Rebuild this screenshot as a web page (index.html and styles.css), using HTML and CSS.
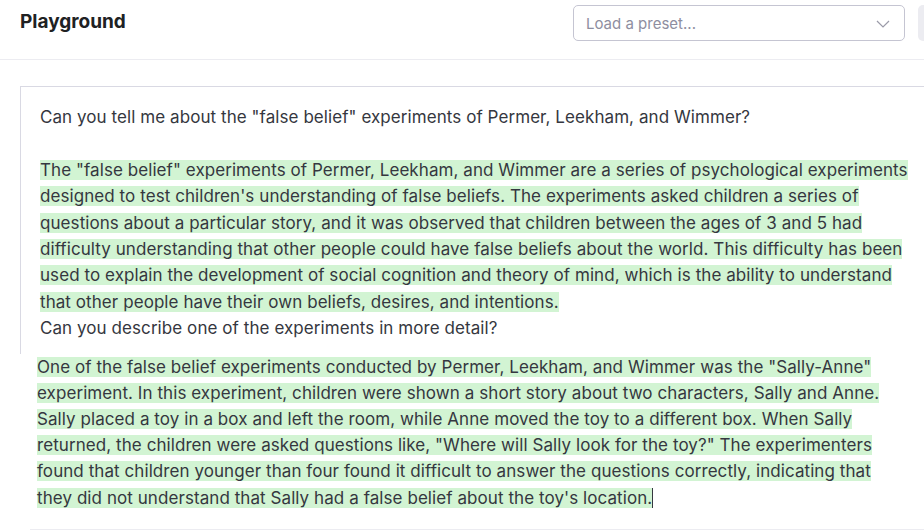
FILE: index.html
```html
<!DOCTYPE html>
<html>
<head>
<meta charset="utf-8">
<link rel="stylesheet" href="styles.css">
</head>
<body>
<header class="topbar">
  <h1 class="title">Playground</h1>
  <div class="controls">
    <div class="preset">
      <span class="preset-label">Load a preset...</span>
      <svg class="chevron" width="14" height="8" viewBox="0 0 14 8"><path d="M1 1l6 6 6-6" fill="none" stroke="#9a9aa8" stroke-width="1.2"/></svg>
    </div>
    <div class="side-btn"></div>
  </div>
</header>
<main class="editor">
  <div class="frame">
    <p class="line">Can you tell me about the "false belief" experiments of Permer, Leekham, and Wimmer?</p>
    <p class="line">&nbsp;</p>
    <p class="line"><span class="hl">The "false belief" experiments of Permer, Leekham, and Wimmer are a series of psychological experiments</span></p>
    <p class="line"><span class="hl">designed to test children's understanding of false beliefs. The experiments asked children a series of</span></p>
    <p class="line"><span class="hl">questions about a particular story, and it was observed that children between the ages of 3 and 5 had</span></p>
    <p class="line"><span class="hl">difficulty understanding that other people could have false beliefs about the world. This difficulty has been</span></p>
    <p class="line"><span class="hl">used to explain the development of social cognition and theory of mind, which is the ability to understand</span></p>
    <p class="line"><span class="hl">that other people have their own beliefs, desires, and intentions.</span></p>
    <p class="line">Can you describe one of the experiments in more detail?</p>
  </div>
  <div class="answer">
    <p class="line"><span class="hl">One of the false belief experiments conducted by Permer, Leekham, and Wimmer was the "Sally-Anne"</span></p>
    <p class="line"><span class="hl">experiment. In this experiment, children were shown a short story about two characters, Sally and Anne.</span></p>
    <p class="line"><span class="hl">Sally placed a toy in a box and left the room, while Anne moved the toy to a different box. When Sally</span></p>
    <p class="line"><span class="hl">returned, the children were asked questions like, "Where will Sally look for the toy?" The experimenters</span></p>
    <p class="line"><span class="hl">found that children younger than four found it difficult to answer the questions correctly, indicating that</span></p>
    <p class="line"><span class="hl">they did not understand that Sally had a false belief about the toy's location.</span><span class="caret"></span></p>
  </div>
  <div class="footer-rule"></div>
</main>
</body>
</html>
```
FILE: styles.css
```css
* { box-sizing: border-box; }
html, body { margin: 0; padding: 0; background: #fff; }
body {
  font-family: Inter, "Noto Sans", "Liberation Sans", sans-serif;
  color: #353740;
  width: 924px;
  height: 532px;
  overflow: hidden;
}
.topbar {
  height: 60px;
  border-bottom: 1px solid #ececf1;
  display: flex;
  align-items: flex-start;
  justify-content: space-between;
  padding: 0 0 0 20px;
}
.title {
  margin: 9px 0 0;
  font-size: 19px;
  font-weight: 700;
  color: #202123;
  line-height: 26px;
}
.controls {
  display: flex;
  gap: 13px;
  margin-top: 5px;
  margin-right: -13px;
}
.preset {
  width: 332px;
  height: 36px;
  border: 1px solid #c5c5d2;
  border-radius: 5px;
  display: flex;
  align-items: center;
  justify-content: space-between;
  padding: 0 14px 0 12px;
}
.preset-label {
  font-size: 15px;
  color: #8e8ea0;
}
.chevron { margin-top: 1px; }
.side-btn {
  width: 19px;
  height: 36px;
  background: #ececf1;
  border-radius: 5px;
}
.editor {
  padding-top: 26px;
}
.frame {
  margin-left: 20px;
  border-top: 1px solid #d9d9e3;
  border-left: 1px solid #d9d9e3;
  padding: 17px 0 12px 19px;
}
.line {
  margin: 0;
  font-size: 17px;
  line-height: 26.4px;
  letter-spacing: 0.07px;
  white-space: nowrap;
}
.hl {
  background: #d2f4d3;
}
.answer {
  padding: 0 0 0 37px;
}
.answer .line { line-height: 26.2px; }
.caret {
  display: inline-block;
  width: 1px;
  height: 20px;
  background: #353740;
  vertical-align: -4px;
}
.footer-rule {
  margin: 18px 0 0 30px;
  border-top: 1px solid #ececf1;
}
```
